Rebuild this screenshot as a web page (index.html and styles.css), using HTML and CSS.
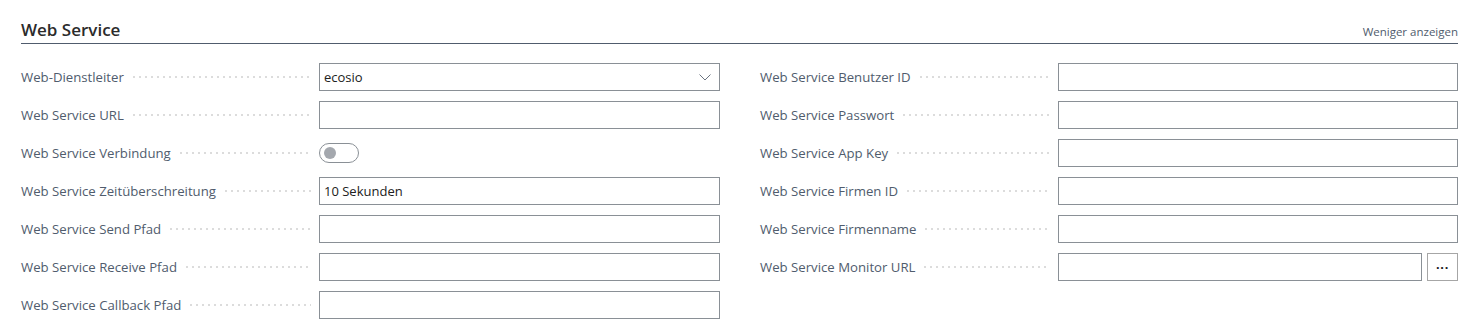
FILE: index.html
```html
<!DOCTYPE html>
<html lang="de">
<head>
  <meta charset="UTF-8">
  <title>Web Service</title>
  <link rel="stylesheet" href="styles.css">
</head>
<body>
  <div class="section">
    <div class="section-header">
      <h2>Web Service</h2>
      <a class="toggle-link" href="#">Weniger anzeigen</a>
    </div>
    <div class="columns">
      <div class="column">
        <div class="field">
          <span class="label">Web-Dienstleiter</span><span class="leader"></span>
          <div class="box select">ecosio
            <svg class="chevron" width="12" height="7" viewBox="0 0 12 7"><path d="M0.5 0.5 L6 6 L11.5 0.5" fill="none" stroke="#6b7480" stroke-width="1"/></svg>
          </div>
        </div>
        <div class="field">
          <span class="label">Web Service URL</span><span class="leader"></span>
          <div class="box"></div>
        </div>
        <div class="field">
          <span class="label">Web Service Verbindung</span><span class="leader"></span>
          <div class="switch-wrap"><span class="switch"><span class="knob"></span></span></div>
        </div>
        <div class="field">
          <span class="label">Web Service Zeitüberschreitung</span><span class="leader"></span>
          <div class="box">10 Sekunden</div>
        </div>
        <div class="field">
          <span class="label">Web Service Send Pfad</span><span class="leader"></span>
          <div class="box"></div>
        </div>
        <div class="field">
          <span class="label">Web Service Receive Pfad</span><span class="leader"></span>
          <div class="box"></div>
        </div>
        <div class="field">
          <span class="label">Web Service Callback Pfad</span><span class="leader"></span>
          <div class="box"></div>
        </div>
      </div>
      <div class="column">
        <div class="field">
          <span class="label">Web Service Benutzer ID</span><span class="leader"></span>
          <div class="box"></div>
        </div>
        <div class="field">
          <span class="label">Web Service Passwort</span><span class="leader"></span>
          <div class="box"></div>
        </div>
        <div class="field">
          <span class="label">Web Service App Key</span><span class="leader"></span>
          <div class="box"></div>
        </div>
        <div class="field">
          <span class="label">Web Service Firmen ID</span><span class="leader"></span>
          <div class="box"></div>
        </div>
        <div class="field">
          <span class="label">Web Service Firmenname</span><span class="leader"></span>
          <div class="box"></div>
        </div>
        <div class="field">
          <span class="label">Web Service Monitor URL</span><span class="leader"></span>
          <div class="box-group">
            <div class="box"></div>
            <button class="more">&middot;&middot;&middot;</button>
          </div>
        </div>
      </div>
    </div>
  </div>
</body>
</html>
```

FILE: styles.css
```css
body {
  margin: 0;
  background: #fff;
  font-family: "Open Sans", "Noto Sans", sans-serif;
  color: #212121;
}
.section {
  padding: 0 4px 0 21px;
}
.section-header {
  display: flex;
  align-items: baseline;
  justify-content: space-between;
  height: 44px;
  border-bottom: 1px solid #505c6d;
  box-sizing: border-box;
  padding-top: 19px;
}
.section-header h2 {
  margin: 0;
  font-size: 17px;
  font-weight: 600;
  line-height: 22px;
  color: #2b2b2b;
}
.toggle-link {
  font-size: 11.5px;
  color: #505c6d;
  text-decoration: none;
}
.columns {
  display: grid;
  grid-template-columns: 699px 698px;
  column-gap: 40px;
  padding-top: 19px;
}
.column {
  display: flex;
  flex-direction: column;
  gap: 10px;
}
.field {
  display: flex;
  align-items: center;
  height: 28px;
}
.label {
  font-size: 13.2px;
  color: #505c6d;
  white-space: nowrap;
  padding-right: 9px;
}
.leader {
  flex: 1;
  height: 2px;
  margin-right: 8px;
  background-image: repeating-linear-gradient(to right, #dcdcdc 0 2px, transparent 2px 6px);
}
.box {
  box-sizing: border-box;
  width: 401px;
  height: 28px;
  border: 1px solid #8a9096;
  padding: 0 4px;
  font-size: 13px;
  line-height: 26px;
  color: #212121;
}
.column + .column .box {
  width: 400px;
}
.select {
  position: relative;
}
.chevron {
  position: absolute;
  right: 8px;
  top: 10px;
}
.switch-wrap {
  width: 401px;
}
.switch {
  display: block;
  box-sizing: border-box;
  width: 40px;
  height: 20px;
  border: 1px solid #8a9096;
  border-radius: 10px;
  padding: 3px 4px;
}
.knob {
  display: block;
  width: 12px;
  height: 12px;
  border-radius: 50%;
  background: #a4a8ae;
}
.box-group {
  display: flex;
  gap: 5px;
  width: 400px;
}
.column + .column .box-group .box {
  width: 364px;
}
.more {
  box-sizing: border-box;
  width: 31px;
  height: 28px;
  border: 1px solid #a6a6a6;
  background: #fff;
  padding: 0;
  font-size: 13px;
  font-weight: 700;
  color: #212121;
  cursor: pointer;
}
```
